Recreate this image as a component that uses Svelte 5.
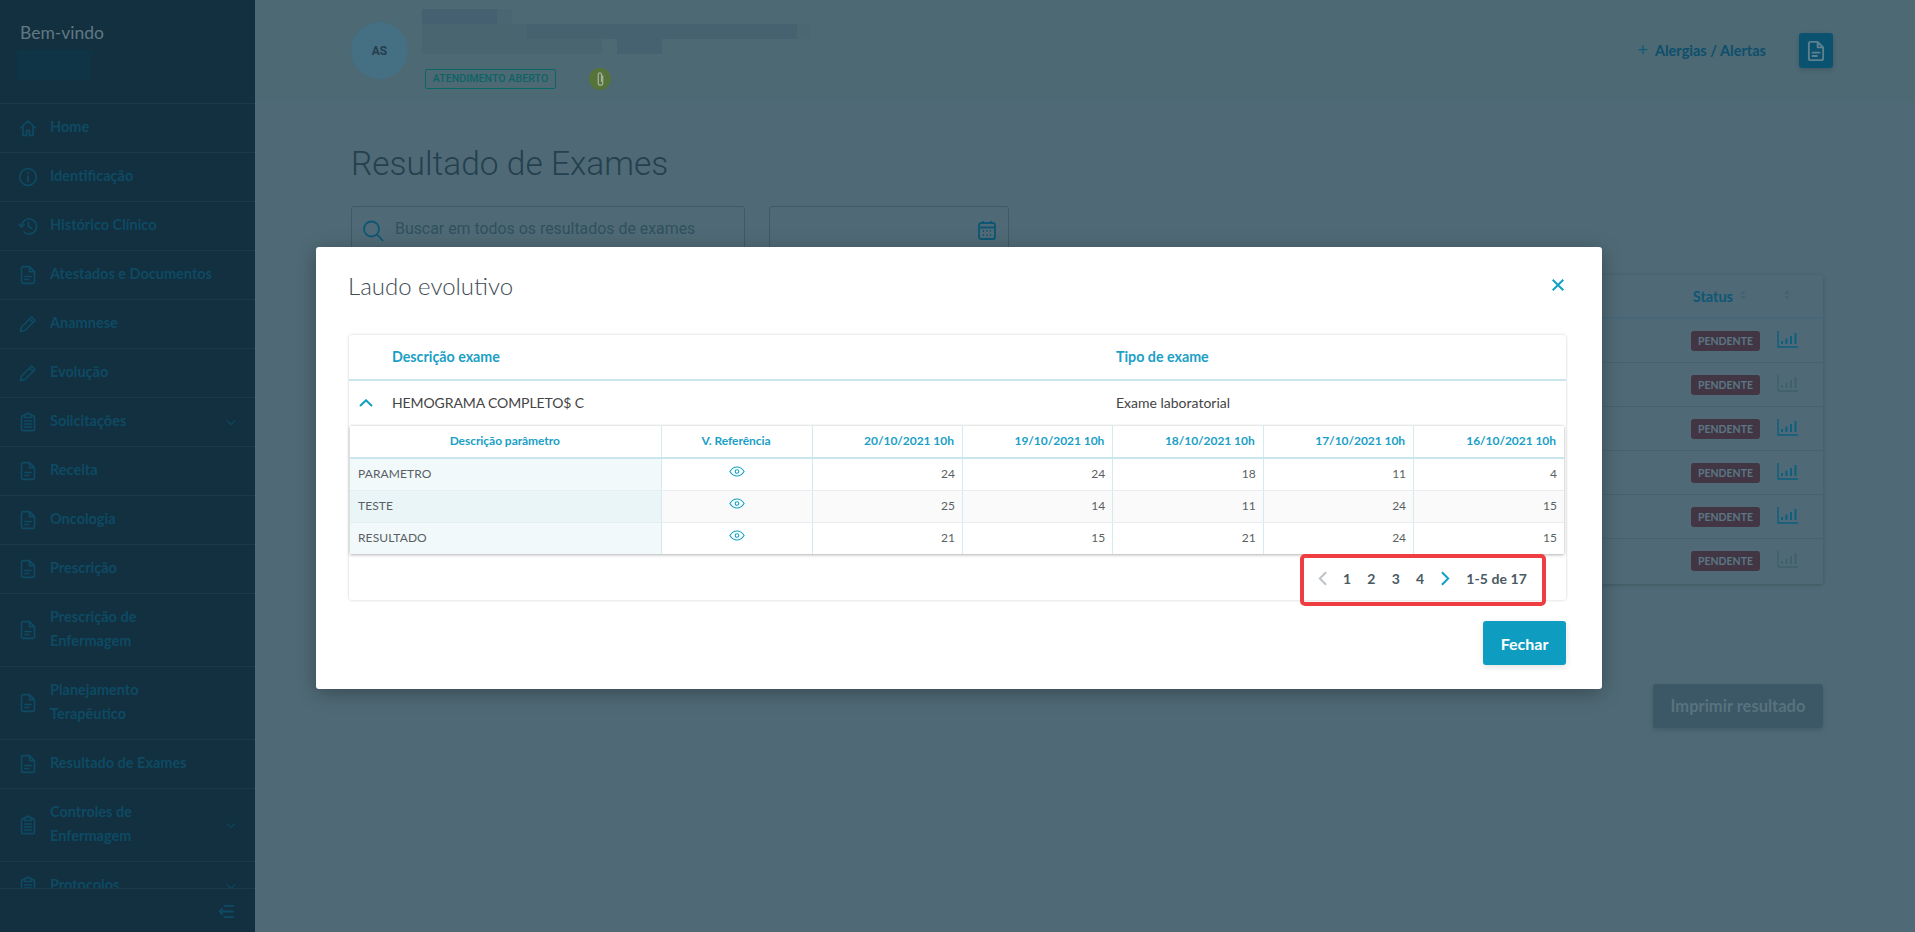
<script>
  const nav = [
    { label: ['Home'], icon: 'home' },
    { label: ['Identificação'], icon: 'info' },
    { label: ['Histórico Clínico'], icon: 'history' },
    { label: ['Atestados e Documentos'], icon: 'doc' },
    { label: ['Anamnese'], icon: 'pencil' },
    { label: ['Evolução'], icon: 'pencil' },
    { label: ['Solicitações'], icon: 'clip', more: true },
    { label: ['Receita'], icon: 'doc' },
    { label: ['Oncologia'], icon: 'doc' },
    { label: ['Prescrição'], icon: 'doc' },
    { label: ['Prescrição de', 'Enfermagem'], icon: 'doc' },
    { label: ['Planejamento', 'Terapêutico'], icon: 'doc' },
    { label: ['Resultado de Exames'], icon: 'doc' },
    { label: ['Controles de', 'Enfermagem'], icon: 'clip', more: true },
    { label: ['Protocolos'], icon: 'clip', more: true }
  ];
  const cardRows = [true, false, true, true, true, false];
  const dates = ['20/10/2021 10h', '19/10/2021 10h', '18/10/2021 10h', '17/10/2021 10h', '16/10/2021 10h'];
  const params = [
    { name: 'PARAMETRO', v: [24, 24, 18, 11, 4] },
    { name: 'TESTE', v: [25, 14, 11, 24, 15] },
    { name: 'RESULTADO', v: [21, 15, 21, 24, 15] }
  ];
</script>

{#snippet icon(name)}
  <svg class="nav-icon" viewBox="0 0 20 20" fill="none" stroke="currentColor" stroke-width="1.7" stroke-linejoin="round" stroke-linecap="round">
    {#if name === 'home'}
      <path d="M2.500 10 10 3l7.500 7M5 8.500V17.500h3.500V12.500h3V17.500H15V8.500" />
    {:else if name === 'info'}
      <circle cx="10" cy="10" r="8.300" /><path d="M10 9v5.500M10 5.600v.6" />
    {:else if name === 'history'}
      <path d="M3.500 10.500a7.500 7.500 0 1 1 2.400 5.500M1 8.500l2.500 2.500L6 8.500M10.500 6v4.500l3.300 2" />
    {:else if name === 'doc'}
      <path d="M3.500 3.200c0-.9.600-1.500 1.500-1.500h6.500l5 5v10.100c0 .9-.6 1.500-1.500 1.500H5c-.9 0-1.500-.6-1.500-1.500zM11.500 1.700v5h5M6.800 11.500h6.400M6.800 14.500h4" />
    {:else if name === 'pencil'}
      <path d="M2.500 17.500 3.500 13 13.500 3l3.500 3.500-10 10zM11.500 5l3.500 3.500" />
    {:else}
      <path d="M6.500 3.700H5c-.9 0-1.500.6-1.500 1.500v12c0 .9.600 1.500 1.500 1.500h10c.9 0 1.500-.6 1.500-1.500v-12c0-.9-.6-1.500-1.500-1.500h-1.500M6.500 2.500h2c0-1.800 3-1.800 3 0h2v3h-7zM6.500 9h7M6.500 12h7M6.500 15h7" />
    {/if}
  </svg>
{/snippet}

{#snippet eye()}
  <svg class="eye" viewBox="0 0 18 12" fill="none" stroke="currentColor" stroke-width="1.200">
    <path d="M1 6c2-3.300 4.800-5 8-5s6 1.700 8 5c-2 3.300-4.800 5-8 5S3 9.300 1 6z" /><circle cx="9" cy="6" r="2" />
  </svg>
{/snippet}

{#snippet sort()}
  <svg class="sort" viewBox="0 0 8 12" fill="currentColor"><path d="M4 0l3.500 4.500h-7zM4 12 .5 7.500h7z" /></svg>
{/snippet}

<div class="app">
  <aside class="sidebar">
    <div class="welcome">
      <div class="hello">Bem-vindo</div>
      <div class="redacted-name"></div>
    </div>
    <nav class="nav">
      {#each nav as item}
        <div class="nav-item">
          {@render icon(item.icon)}
          <span class="nav-label">{#each item.label as l}<span>{l}</span>{/each}</span>
          {#if item.more}
            <svg class="nav-more" viewBox="0 0 12 8" fill="none" stroke="currentColor" stroke-width="1.300"><path d="M1 1.500 6 6.500l5-5" /></svg>
          {/if}
        </div>
      {/each}
    </nav>
    <div class="side-foot">
      <svg class="collapse" viewBox="0 0 18 14" fill="none" stroke="currentColor" stroke-width="2"><path d="M6 1h11M1 7h16M6 13h11M5 3.500 1.500 7 5 10.500" /></svg>
    </div>
  </aside>

  <main class="main">
    <header class="topbar">
      <div class="avatar">AS</div>
      <div class="patient">
        <div class="blur-line b1"></div>
        <div class="blur-line b2"></div>
        <div class="blur-line b3"><i></i><i></i></div>
        <div class="tags">
          <span class="tag">ATENDIMENTO ABERTO</span>
          <span class="clip-dot">
            <svg viewBox="0 0 10 18" fill="none" stroke="currentColor" stroke-width="1.400"><path d="M7.500 5v8.500a2.500 2.500 0 0 1-5 0V4a1.800 1.800 0 0 1 3.600 0v8.500" /></svg>
          </span>
        </div>
      </div>
      <div class="top-actions">
        <span class="alerts"><span class="plus">+</span>Alergias / Alertas</span>
        <span class="doc-btn">{@render icon('doc')}</span>
      </div>
    </header>

    <section class="content">
      <h1>Resultado de Exames</h1>
      <div class="filters">
        <div class="field search">
          <svg viewBox="0 0 22 22" fill="none" stroke="currentColor" stroke-width="1.800"><circle cx="9.500" cy="9.500" r="7.500" /><path d="m15 15 6 6.500" /></svg>
          <span>Buscar em todos os resultados de exames</span>
        </div>
        <div class="field date">
          <svg viewBox="0 0 18 20" fill="none" stroke="currentColor" stroke-width="1.800"><rect x="1" y="3" width="16" height="16" rx="2" /><path d="M1 7.500h16M5 1v3M13 1v3M5 11h1M8.500 11h1M12 11h1M5 15h1M8.500 15h1M12 15h1" /></svg>
        </div>
      </div>
      <div class="card">
        <div class="card-head">
          <span class="status-h">Status</span>{@render sort()}
          <span class="head-sort">{@render sort()}</span>
        </div>
        {#each cardRows as on}
          <div class="card-row">
            <span class="badge">PENDENTE</span>
            <svg class="chart" class:off={!on} viewBox="0 0 21 17" fill="none" stroke="currentColor"><path stroke-width="1.400" d="M1 0v16h20" /><path stroke-width="2" d="M5 13v-3M9.500 13V7.500M14 13V5M18.500 13V2" /></svg>
          </div>
        {/each}
      </div>
      <div class="print-row"><button class="print">Imprimir resultado</button></div>
    </section>
  </main>

  <div class="modal">
    <div class="modal-head">
      <h2>Laudo evolutivo</h2>
      <svg class="close" viewBox="0 0 12 12" fill="none" stroke="currentColor" stroke-width="2"><path d="m.7.7 10.600 10.600M11.300.7.700 11.300" /></svg>
    </div>
    <div class="frame">
      <div class="exam-head">
        <span class="c-name">Descrição exame</span>
        <span class="c-type">Tipo de exame</span>
      </div>
      <div class="exam-row">
        <svg class="up" viewBox="0 0 14 8" fill="none" stroke="currentColor" stroke-width="2"><path d="M1 7 7 1.300 13 7" /></svg>
        <span class="c-name">HEMOGRAMA COMPLETO$ C</span>
        <span class="c-type">Exame laboratorial</span>
      </div>
      <table>
        <thead>
          <tr>
            <th class="col-a">Descrição parâmetro</th>
            <th class="col-b">V. Referência</th>
            {#each dates as d}<th class="num">{d}</th>{/each}
          </tr>
        </thead>
        <tbody>
          {#each params as p}
            <tr>
              <td class="name">{p.name}</td>
              <td class="ref">{@render eye()}</td>
              {#each p.v as n}<td class="num">{n}</td>{/each}
            </tr>
          {/each}
        </tbody>
      </table>
      <div class="pager-row">
        <div class="pager">
          <svg class="prev" viewBox="0 0 10 16" fill="none" stroke="currentColor" stroke-width="2.200"><path d="M9 1 2 8l7 7" /></svg>
          <span>1</span><span>2</span><span>3</span><span>4</span>
          <svg class="next" viewBox="0 0 10 16" fill="none" stroke="currentColor" stroke-width="2.200"><path d="m1 1 7 7-7 7" /></svg>
          <span class="total">1-5 de 17</span>
        </div>
      </div>
    </div>
    <div class="modal-foot"><button class="close-btn">Fechar</button></div>
  </div>
</div>

<style>
  :global(body) { margin: 0; }
  .app {
    position: relative;
    display: flex;
    width: 1915px;
    height: 932px;
    overflow: hidden;
    background: #4f6a76;
    font-family: "Lato", "Liberation Sans", sans-serif;
    font-size: 14.500px;
  }
  .sidebar {
    width: 255px;
    flex: none;
    display: flex;
    flex-direction: column;
    background: #12303f;
    color: #0e4a63;
  }
  .welcome { height: 104px; box-sizing: border-box; padding: 22px 0 0 20px; border-bottom: 1px solid #1a3a4a; }
  .hello { font-size: 17.500px; line-height: 22px; color: #627883; }
  .redacted-name { width: 74px; height: 30px; margin: 6px 0 0 -3px; background: #0f3446; }
  .nav { flex: 1; overflow: hidden; min-height: 0; }
  .nav-item {
    display: flex;
    align-items: center;
    min-height: 48px;
    border-bottom: 1px solid #1a3a4a;
    font-weight: 700;
  }
  .nav-icon { width: 20px; height: 20px; margin: 0 12px 0 18px; flex: none; }
  .nav-label { display: flex; flex-direction: column; line-height: 24px; flex: 1; margin-top: -2px; }
  .nav-item:has(.nav-label span + span) { min-height: 72px; }
  .nav-more { width: 10px; height: 7px; margin-right: 19px; }
  .side-foot { height: 44px; flex: none; box-sizing: border-box; border-top: 1px solid #1a3a4a; display: flex; align-items: center; justify-content: flex-end; padding-right: 20px; background: #12303f; }
  .collapse { width: 17px; height: 13px; margin-top: 1px; }

  .main { flex: 1; min-width: 0; }
  .topbar { height: 102px; box-sizing: border-box; padding: 0 82px 0 96px; display: flex; align-items: flex-start; background: #4c6974; }
  .avatar { width: 57px; height: 57px; margin-top: 22px; border-radius: 50%; background: #456f83; color: #243e4b; font-size: 12px; font-weight: 700; display: flex; align-items: center; justify-content: center; font-family: "Roboto", sans-serif; }
  .patient { margin: 9px 0 0 14px; width: 400px; }
  .blur-line { height: 15px; background: #466270; }
  .b1 { width: 90px; background: linear-gradient(90deg, #456070 75px, #4a6672 75px); }
  .b2 { width: 388px; background: linear-gradient(90deg, #49656f 105px, #466270 105px, #466270 375px, #4a6772 375px); }
  .b3 { width: 240px; background: none; display: flex; justify-content: space-between; }
  .b3 i { display: block; height: 15px; background: #49656f; width: 180px; }
  .b3 i + i { width: 45px; background: #466270; }
  .tags { display: flex; align-items: center; margin: 14px 0 0 3px; gap: 33px; }
  .tag { width: 131px; height: 20px; box-sizing: border-box; border: 1px solid #0b6668; border-radius: 2px; color: #0d6466; font: 500 10.500px/18px "Roboto", sans-serif; text-align: center; letter-spacing: .1px; }
  .clip-dot { width: 22px; height: 22px; border-radius: 50%; background: #56733a; color: #a3b09d; display: flex; align-items: center; justify-content: center; }
  .clip-dot svg { width: 9px; height: 16px; }
  .top-actions { margin-left: auto; display: flex; align-items: center; margin-top: 33px; height: 35px; gap: 33px; }
  .alerts { color: #0d4f6c; font-weight: 700; font-size: 14.500px; margin-top: -3px; }
  .plus { font-weight: 400; font-size: 18px; margin-right: 7px; color: #0d5c7a; }
  .doc-btn { width: 34px; height: 35px; border-radius: 3px; background: #0a526f; color: #5f808e; display: flex; align-items: center; justify-content: center; box-shadow: 0 2px 5px rgba(0,0,0,.15); }
  .doc-btn .nav-icon { margin: 0; width: 22px; height: 22px; }

  .content { padding: 0 92px 0 96px; }
  h1 { margin: 0; padding-top: 42px; font: 300 33.500px/40px "Roboto", sans-serif; color: #25404e; }
  .filters { display: flex; gap: 24px; margin-top: 22px; }
  .field { height: 48px; box-sizing: border-box; border: 1px solid #3d5a68; border-radius: 3px; display: flex; align-items: center; color: #0d5674; }
  .search { width: 394px; padding-left: 10px; gap: 11px; }
  .search svg { width: 22px; height: 23px; }
  .search span { font: 400 15.900px "Roboto", sans-serif; color: #2f505f; margin-top: -4px; }
  .date { width: 240px; justify-content: flex-end; padding-right: 12px; }
  .date svg { width: 18px; height: 20px; }
  .card { margin-top: 21px; height: 309px; border-radius: 3px; box-shadow: 0 1px 4px rgba(0,0,0,.2); }
  .card-head { height: 42px; border-bottom: 2px solid #44687a; display: flex; justify-content: flex-end; align-items: center; color: #0d5674; font-weight: 700; padding-right: 33px; }
  .status-h { margin-right: 7px; }
  .sort { width: 6px; height: 10px; color: #43626f; margin-bottom: 2px; }
  .head-sort { margin-left: 38px; display: flex; }
  .card-row { height: 43px; border-bottom: 1px solid #466270; display: flex; justify-content: flex-end; align-items: center; padding-right: 25px; gap: 17px; }
  .card-row:last-child { border-bottom: 0; }
  .badge { width: 69px; height: 20px; border-radius: 3px; background: #423644; color: #5a7684; font-size: 10.500px; font-weight: 700; line-height: 20px; text-align: center; }
  .chart { width: 21px; height: 17px; color: #0d5f7d; margin-top: -3px; }
  .chart.off { color: #3f5f6e; }
  .print-row { display: flex; justify-content: flex-end; margin-top: 100px; }
  .print { width: 170px; height: 44px; border: 0; border-radius: 3px; background: #3c5765; color: #587280; font: 700 16.500px "Lato", sans-serif; box-shadow: 0 2px 5px rgba(0,0,0,.15); }

  .modal {
    position: absolute;
    left: 316px;
    top: 247px;
    width: 1286px;
    height: 442px;
    box-sizing: border-box;
    padding: 0 36px 0 33px;
    background: #fff;
    border-radius: 3px;
    box-shadow: 0 4px 20px rgba(0,0,0,.3);
  }
  .modal-head { height: 88px; display: flex; justify-content: space-between; }
  h2 { margin: 25px 0 0 -1px; font: 300 24px/28px "Lato", sans-serif; color: #3d4c55; }
  .close { width: 12px; height: 12px; margin: 32px 2px 0 0; color: #12a0c4; }
  .frame { border-radius: 3px; box-shadow: 0 0 3px rgba(0,0,0,.2); height: 265px; display: flex; flex-direction: column; }
  .exam-head, .exam-row { display: flex; flex: none; align-items: center; position: relative; padding-left: 43px; font-size: 14px; }
  .exam-head { height: 42px; padding-bottom: 2px; border-bottom: 2px solid #c9e6ef; font-weight: 700; color: #1aa0c6; font-size: 14.250px; }
  .exam-row { height: 43px; padding-bottom: 2px; color: #444; }
  .exam-row .c-name { letter-spacing: -.1px; }
  .c-name { width: 724px; }
  .up { position: absolute; left: 10px; top: 18px; width: 14px; height: 8px; color: #0f9dc2; }
  table {
    flex: none;
    width: 1214px;
    margin-left: 1px;
    border-collapse: collapse;
    table-layout: fixed;
    font-size: 12px;
    box-shadow: 0 1px 3px rgba(0,0,0,.3), 0 -1px 2px rgba(0,0,0,.06);
  }
  th { height: 32px; color: #1aa0c6; font-weight: 700; border-bottom: 2px solid #c9e6ef; border-right: 1px solid #d3eaf1; padding: 0 8px 2px 7px; white-space: nowrap; box-sizing: border-box; letter-spacing: -.05px; }
  td { height: 32px; color: #5a5f63; border-bottom: 1px solid #e8eeef; border-right: 1px solid #d3eaf1; padding: 0 7px 2px; box-sizing: border-box; }
  tbody tr:last-child td { border-bottom: 0; }
  tbody tr:nth-child(2) td { background: #fafafa; }
  th:last-child, td:last-child { border-right: 0; }
  .col-a { width: 311px; }
  .col-b { width: 151px; }
  .num { text-align: right; }
  td.name { background: #f1f9fb; padding-left: 8px; letter-spacing: .1px; }
  tbody tr:nth-child(2) td.name { background: #e9f5f7; }
  .ref { text-align: center; color: #12a0c4; }
  .eye { width: 16px; height: 11px; display: block; margin: -3px auto 0; }
  .pager-row { flex: 1 1 0; min-height: 0; display: flex; justify-content: flex-end; align-items: flex-start; }
  .pager {
    position: relative;
    display: flex;
    align-items: center;
    height: 48px;
    margin: 0 20px 0 0;
    font-size: 14px;
    font-weight: 700;
    color: #4a5a63;
    padding-right: 19px;
  }
  .pager::after {
    content: "";
    position: absolute;
    left: -18px;
    right: 0;
    top: 0;
    bottom: -4px;
    border: 4px solid #ef3e42;
    border-radius: 5px;
  }
  .pager span { width: 24.300px; text-align: center; }
  .pager .total { width: auto; margin-left: 16px; letter-spacing: .1px; }
  .prev, .next { width: 9px; height: 15px; }
  .prev { color: #bcc4c7; margin-right: 8px; }
  .next { color: #12a0c4; margin-left: 9px; }
  .modal-foot { display: flex; justify-content: flex-end; margin-top: 21px; }
  .close-btn { width: 83px; height: 44px; border: 0; border-radius: 3px; background: #0e9cc0; color: #fff; font: 700 16px "Lato", sans-serif; box-shadow: 0 2px 6px rgba(0,0,0,.12); }
</style>
